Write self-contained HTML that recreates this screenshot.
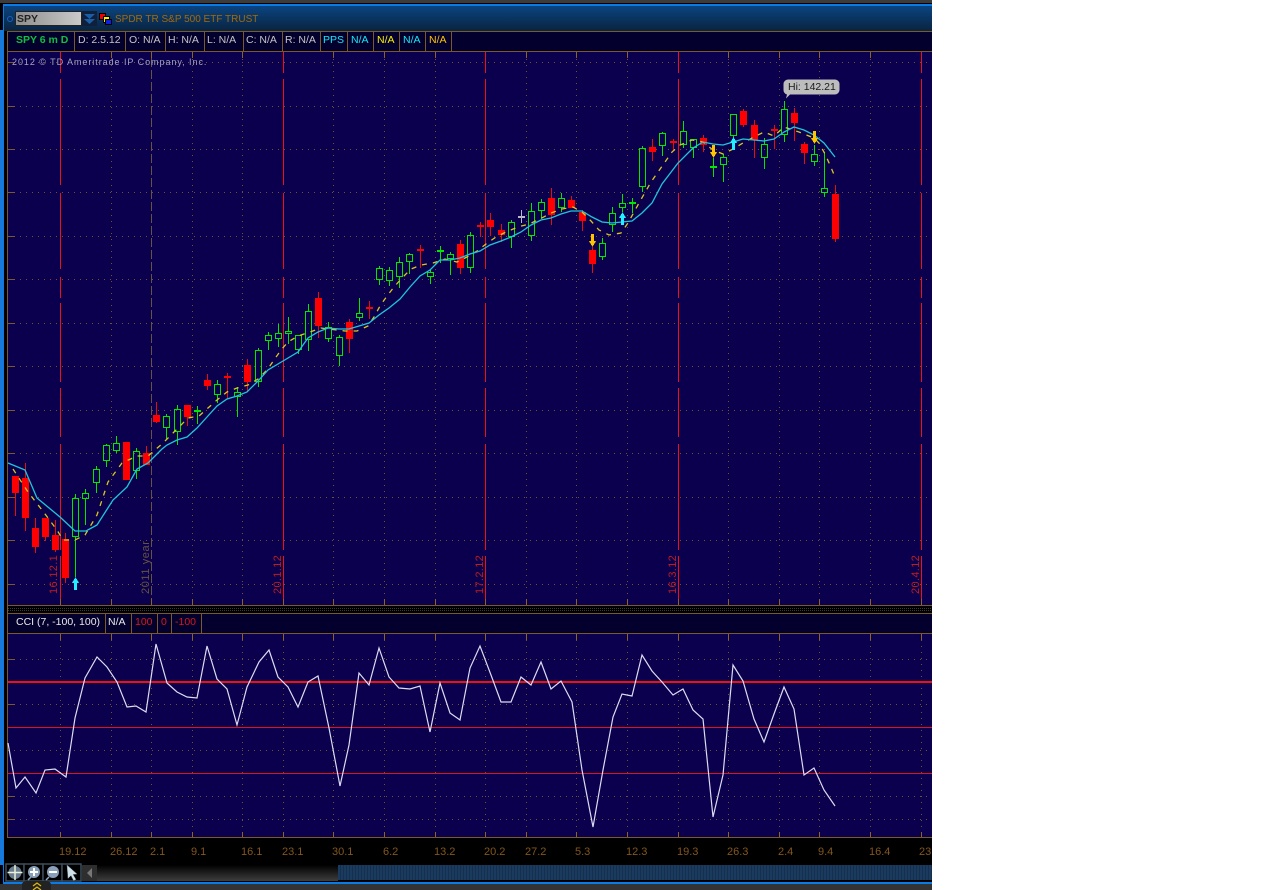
<!DOCTYPE html>
<html><head><meta charset="utf-8"><title>SPY</title>
<style>
html,body{margin:0;padding:0;background:#fff}
body{width:1274px;height:890px;overflow:hidden;position:relative;font-family:"Liberation Sans",sans-serif}
#f{position:absolute;left:0;top:0;width:932px;height:890px;background:#000;overflow:hidden}
.a{position:absolute}
.t{position:absolute;white-space:nowrap;font-size:10.5px;line-height:13px}
.x{position:absolute;top:846px;color:#84561e;font-size:11px;line-height:13px;white-space:nowrap}
</style></head><body>
<div id="f">
<div class="a" style="left:0;top:0;width:932px;height:3px;background:#3c3c3c"></div>
<div class="a" style="left:3px;top:4px;width:929px;height:2px;background:#0a7ae6"></div>
<div class="a" style="left:3px;top:4px;width:1px;height:879px;background:#0a7ae6"></div>
<div class="a" style="left:3px;top:882px;width:929px;height:2px;background:#0a7ae6"></div>
<div class="a" style="left:0;top:30px;width:3px;height:835px;background:#1a78d8"></div>
<div class="a" style="left:4px;top:6px;width:928px;height:25px;background:linear-gradient(#0a4480,#0a2440)"></div>
<div class="a" style="left:7px;top:31px;width:925px;height:1px;background:#7a5a20"></div>
<div class="a" style="left:7px;top:32px;width:925px;height:19px;background:#04002e"></div>
<div class="a" style="left:7px;top:614px;width:925px;height:19px;background:#04002e"></div>

<svg class="a" style="left:0;top:0" width="932" height="890" viewBox="0 0 932 890">
<rect x="8" y="52" width="924" height="553" fill="#0a004e"/>
<rect x="8" y="634" width="924" height="203" fill="#0a004e"/>
<g shape-rendering="crispEdges">
<path d="M7 31.5H932M7 51.5H932M7 605.5H932M7 613.5H932M7 633.5H932M7 837.5H932M7.5 31V838" stroke="#7a5a28" fill="none"/>
<path d="M8 608.5H932M8 610.5H932" stroke="#3a3a3a" stroke-dasharray="1 1"/>
<path d="M74.5 32V51M125.5 32V51M165.5 32V51M204.5 32V51M243.5 32V51M282.5 32V51M320.5 32V51M347.5 32V51M373.5 32V51M399.5 32V51M425.5 32V51M451.5 32V51M105.5 614V633M131.5 614V633M157.5 614V633M171.5 614V633M201.5 614V633" stroke="#7a5a28"/>
<path d="M8 62.5H932M8 106.5H932M8 149.5H932M8 192.5H932M8 236.5H932M8 279.5H932M8 323.5H932M8 366.5H932M8 410.5H932M8 453.5H932M8 497.5H932M8 540.5H932M8 584.5H932M8 659.5H932M8 704.5H932M8 750.5H932M8 796.5H932M8 819.5H932" stroke="#705430" stroke-dasharray="1 5" fill="none"/>
<path d="M111.5 59V599M192.5 59V599M242.5 59V599M333.5 59V599M384.5 59V599M435.5 59V599M526.5 59V599M576.5 59V599M627.5 59V599M728.5 59V599M779.5 59V599M819.5 59V599M870.5 59V599M60.5 640V832M111.5 640V832M151.5 640V832M192.5 640V832M242.5 640V832M283.5 640V832M333.5 640V832M384.5 640V832M435.5 640V832M485.5 640V832M526.5 640V832M576.5 640V832M627.5 640V832M678.5 640V832M728.5 640V832M779.5 640V832M819.5 640V832M870.5 640V832M921.5 640V832" stroke="#705430" stroke-dasharray="1 5" fill="none"/>
<path d="M8 62.5h7M8 106.5h7M8 149.5h7M8 192.5h7M8 236.5h7M8 279.5h7M8 323.5h7M8 366.5h7M8 410.5h7M8 453.5h7M8 497.5h7M8 540.5h7M8 584.5h7M8 659.5h7M8 704.5h7M8 796.5h7M8 819.5h7" stroke="#7a5a28"/>
<path d="M111.5 52v6M151.5 52v6M192.5 52v6M242.5 52v6M333.5 52v6M384.5 52v6M435.5 52v6M526.5 52v6M576.5 52v6M627.5 52v6M728.5 52v6M779.5 52v6M819.5 52v6M870.5 52v6M60.5 599v6M111.5 599v6M151.5 599v6M192.5 599v6M242.5 599v6M283.5 599v6M333.5 599v6M384.5 599v6M435.5 599v6M485.5 599v6M526.5 599v6M576.5 599v6M627.5 599v6M678.5 599v6M728.5 599v6M779.5 599v6M819.5 599v6M870.5 599v6M921.5 599v6M60.5 634v6M111.5 634v6M151.5 634v6M192.5 634v6M242.5 634v6M283.5 634v6M333.5 634v6M384.5 634v6M435.5 634v6M485.5 634v6M526.5 634v6M576.5 634v6M627.5 634v6M678.5 634v6M728.5 634v6M779.5 634v6M819.5 634v6M870.5 634v6M921.5 634v6M60.5 832v5M111.5 832v5M151.5 832v5M192.5 832v5M242.5 832v5M283.5 832v5M333.5 832v5M384.5 832v5M435.5 832v5M485.5 832v5M526.5 832v5M576.5 832v5M627.5 832v5M678.5 832v5M728.5 832v5M779.5 832v5M819.5 832v5M870.5 832v5M921.5 832v5" stroke="#8a6428" fill="none"/>
<path d="M151.500 58V599" stroke="#665440" stroke-dasharray="9 3"/>
<path d="M60.500 52V73M60.500 79V185M60.500 193V269M60.500 277V298M60.500 303V382M60.500 388V437M60.500 444V550M60.500 556V599M283.500 52V73M283.500 79V185M283.500 193V269M283.500 277V298M283.500 303V382M283.500 388V437M283.500 444V550M283.500 556V599M485.500 52V73M485.500 79V185M485.500 193V269M485.500 277V298M485.500 303V382M485.500 388V437M485.500 444V550M485.500 556V599M678.500 52V73M678.500 79V185M678.500 193V269M678.500 277V298M678.500 303V382M678.500 388V437M678.500 444V550M678.500 556V599M921.500 52V73M921.500 79V185M921.500 193V269M921.500 277V298M921.500 303V382M921.500 388V437M921.500 444V550M921.500 556V599" stroke="#ee1018"/>
<path d="M8 682H932" stroke="#f01010" stroke-width="2"/>
<path d="M8 727.500H932M8 773.500H932" stroke="#e01020"/>

<!-- red candles -->
<path stroke="#e80c0c" fill="none" d="M15.5 476V516M25.5 463V531M35.5 518V553M45.5 518V541M55.5 520V552M65.5 533V583M146.5 446V465M156.5 402V423M187.5 405V426M207.5 374V390M227.5 373V399M247.5 359V391M318.5 292V338M349.5 319V353M369.5 301V319M420.5 245V268M460.5 240V274M480.5 222V237M490.5 213V236M501.5 224V242M551.5 188V225M571.5 196V208M582.5 210V231M592.5 247V273M652.5 139V161M673.5 139V150M703.5 135V152M743.5 109V127M754.5 120V158M774.5 125V149M794.5 108V141M804.5 142V164M835.5 185V242"/>
<path fill="#ff0000" d="M12 476h7v17h-7zM22 478h7v40h-7zM32 528h7v19h-7zM42 518h7v19h-7zM52 535h7v15h-7zM62 539h7v39h-7zM123 442h7v38h-7zM143 453h7v12h-7zM153 415h7v7h-7zM184 405h7v12h-7zM204 380h7v6h-7zM224 376h7v2h-7zM244 365h7v17h-7zM315 298h7v28h-7zM346 322h7v17h-7zM366 307h7v2h-7zM417 249h7v2h-7zM457 244h7v24h-7zM477 225h7v2h-7zM487 220h7v7h-7zM498 230h7v5h-7zM548 198h7v17h-7zM568 200h7v8h-7zM579 212h7v9h-7zM589 250h7v14h-7zM649 147h7v5h-7zM670 141h7v2h-7zM700 138h7v7h-7zM740 111h7v14h-7zM751 125h7v15h-7zM771 129h7v2h-7zM791 113h7v10h-7zM801 144h7v9h-7zM832 194h7v45h-7z"/>
<!-- gray doji -->
<path stroke="#b8b8c8" fill="none" d="M521.5 210V223"/><rect x="518" y="216" width="7" height="2" fill="#b8b8c8"/>
<!-- green candles -->
<path stroke="#00e800" fill="none" d="M75.5 494v4M75.5 537v40M72.5 498.5h6v38h-6zM85.5 489v4M85.5 499v26M82.5 493.5h6v5h-6zM96.5 466v3M96.5 483v10M93.5 469.5h6v13h-6zM106.5 444v1M106.5 461v6M103.5 445.5h6v15h-6zM116.5 436v7M116.5 451v2M113.5 443.5h6v7h-6zM136.5 448v3M136.5 471v8M133.5 451.5h6v19h-6zM166.5 414v2M166.5 428v11M163.5 416.5h6v11h-6zM177.5 405v4M177.5 432v13M174.5 409.5h6v22h-6zM197.5 406v18M217.5 380v4M217.5 395v8M214.5 384.5h6v10h-6zM237.5 387v5M237.5 397v20M234.5 392.5h6v4h-6zM258.5 348v2M258.5 382v5M255.5 350.5h6v31h-6zM268.5 332v3M268.5 341v9M265.5 335.5h6v5h-6zM278.5 324v9M278.5 339v8M275.5 333.5h6v5h-6zM288.5 317v14M288.5 334v10M285.5 331.5h6v2h-6zM298.5 350v4M295.5 335.5h6v14h-6zM308.5 304v7M308.5 340v11M305.5 311.5h6v28h-6zM328.5 322v5M328.5 339v3M325.5 327.5h6v11h-6zM339.5 335v2M339.5 356v10M336.5 337.5h6v18h-6zM359.5 298v15M359.5 318v3M356.5 313.5h6v4h-6zM379.5 266v2M379.5 280v5M376.5 268.5h6v11h-6zM389.5 267v3M389.5 281v5M386.5 270.5h6v10h-6zM399.5 257v5M399.5 277v11M396.5 262.5h6v14h-6zM409.5 253v1M409.5 262v12M406.5 254.5h6v7h-6zM430.5 270v2M430.5 277v7M427.5 272.5h6v4h-6zM440.5 246v17M450.5 252v2M450.5 259v16M447.5 254.5h6v4h-6zM470.5 232v3M470.5 268v5M467.5 235.5h6v32h-6zM511.5 220v2M511.5 237v11M508.5 222.5h6v14h-6zM531.5 203v8M531.5 236v5M528.5 211.5h6v24h-6zM541.5 199v3M541.5 211v8M538.5 202.5h6v8h-6zM561.5 193v5M561.5 208v4M558.5 198.5h6v9h-6zM602.5 238v5M602.5 257v3M599.5 243.5h6v13h-6zM612.5 207v6M612.5 225v7M609.5 213.5h6v11h-6zM622.5 194v9M622.5 208v4M619.5 203.5h6v4h-6zM632.5 198v15M642.5 146v2M642.5 187v5M639.5 148.5h6v38h-6zM662.5 132v1M662.5 146v10M659.5 133.5h6v12h-6zM683.5 121v10M683.5 145v3M680.5 131.5h6v13h-6zM693.5 148v10M690.5 139.5h6v8h-6zM713.5 158v19M723.5 154v3M723.5 165v17M720.5 157.5h6v7h-6zM733.5 136v14M730.5 114.5h6v21h-6zM764.5 138v6M764.5 158v11M761.5 144.5h6v13h-6zM784.5 101v8M784.5 135v7M781.5 109.5h6v25h-6zM814.5 145v9M814.5 162v4M811.5 154.5h6v7h-6zM824.5 152v36M824.5 193v4M821.5 188.5h6v4h-6z"/>
<path fill="#00e800" d="M194 410h7v2h-7zM437 250h7v2h-7zM629 202h7v2h-7zM710 166h7v2h-7z"/>
</g>

<!-- moving averages -->
<polyline fill="none" stroke="#d8c81c" stroke-width="1.3" stroke-dasharray="5 6" points="13,469 28,492 42,510 57,530 63,540 75,540 85,535 97,515 108,482 122,463 137,456 148,456 162,444 171,435 179,427 188,418 199,416 208,408 217,400 227,392 237,388 248,385 258,379 267,370 274,360 281,350 288,342 298,336 310,332 321,328 345,331 357,331 368,326 374,317 380,306 387,296 394,287 402,278 411,269 421,265 433,263 445,259 457,262 467,257 477,251 486,244 496,237 506,232 518,227 529,224 540,219 551,213 562,209 573,207 582,212 591,221 599,230 609,235 621,233 628,223 639,203 651,182 658,172 665,162 672,152 680,145 692,140 703,142 713,150 723,154 733,149 743,143 754,137 764,132 774,136 784,127 799,132 814,138 819,143 825,154 830,165 835,177"/>
<polyline fill="none" stroke="#1fc6da" stroke-width="1.3" points="8,463 25,470 37,498 60,517 75,531 86,531 97,525 113,500 127,487 137,469 148,463 162,449 167,445 177,440 187,437 197,428 207,417 217,406 227,399 237,396 247,392 258,381 268,370 283,361 298,352 308,338 318,332 328,328 339,329 349,329 359,326 369,323 379,315 389,308 400,299 410,287 420,276 430,270 440,260 450,260 460,258 470,254 480,251 490,245 501,241 511,237 521,232 531,225 541,220 551,218 561,214 571,211 582,211 592,217 602,222 612,223 622,222 632,221 642,213 652,203 662,184 678,163 693,148 703,142 713,144 723,145 733,142 743,139 754,140 764,141 774,139 784,132 794,127 804,130 814,135 824,143 835,157"/>

<!-- arrows -->
<g shape-rendering="crispEdges">
<path fill="#22f0ff" d="M75.5 577l3.5 6h-2v7h-3v-7h-2zM622.5 212l3.5 6h-2v7h-3v-7h-2zM733.5 137l3.5 6h-2v7h-3v-7h-2z"/>
<path fill="#ffc400" d="M592.5 247l-3.5-6h2v-7h3v7h2zM713.5 158l-3.5-6h2v-7h3v7h2zM814.5 144l-3.5-6h2v-7h3v7h2z"/>
</g>

<!-- CCI -->
<polyline fill="none" stroke="#dcdcf0" stroke-width="1.2" points="8,743 16,788 25,777 36,793 45,770 55,769 66,777 75,718 85,678 97,657 107,667 117,682 127,707 136,706 146,712 156,644 167,683 177,692 187,697 197,698 207,646 217,679 227,689 237,725 247,687 259,662 269,650 278,677 288,687 298,707 308,682 318,676 329,728 340,786 349,745 359,673 369,685 379,648 389,677 399,688 410,689 420,686 430,732 440,683 450,713 460,720 470,668 480,646 491,675 501,702 511,702 521,677 531,685 541,662 551,689 561,681 572,702 582,770 593,827 603,770 613,717 622,694 632,696 642,655 652,671 662,682 673,695 683,689 693,710 703,719 713,817 723,775 733,665 743,681 754,719 764,742 774,714 784,687 794,709 804,775 814,768 824,790 835,806"/>

<!-- rotated labels -->
<g font-family="'Liberation Sans',sans-serif" font-size="11" letter-spacing=".35">
<text transform="translate(57 594) rotate(-90)" fill="#c01c20">16.12.1</text>
<text transform="translate(149 594) rotate(-90)" fill="#665440" letter-spacing=".6">2011 year</text>
<text transform="translate(281 594) rotate(-90)" fill="#c01c20">20.1.12</text>
<text transform="translate(483 594) rotate(-90)" fill="#c01c20">17.2.12</text>
<text transform="translate(676 594) rotate(-90)" fill="#c01c20">16.3.12</text>
<text transform="translate(919 594) rotate(-90)" fill="#c01c20">20.4.12</text>
</g>

<!-- Hi label -->
<path d="M788 79.5h47a4.5 4.5 0 0 1 4.5 4.5v6a4.5 4.5 0 0 1-4.5 4.5h-45l-4 4 1-4a4.5 4.5 0 0 1-3.500-4.500v-6a4.500 4.500 0 0 1 4.500-4.500z" fill="#bdbdbd"/>
</svg>

<div class="t" style="left:788px;top:81px;color:#1a1a1a">Hi: 142.21</div>
<div class="t" style="left:12px;top:56px;color:#a4a4bc;font-size:9px;letter-spacing:.95px">2012 © TD Ameritrade IP Company, Inc.</div>

<!-- title bar -->
<div class="a" style="left:7px;top:16px;width:4px;height:4px;border:1px solid #1a60c0;border-radius:50%"></div>
<div class="a" style="left:15px;top:11px;width:67px;height:15px;background:linear-gradient(90deg,#8e8e8e,#cacaca);border:1px solid #222;box-sizing:border-box"></div>
<div class="t" style="left:17px;top:13px;font-weight:bold;color:#222">SPY</div>
<svg class="a" style="left:82px;top:11px" width="15" height="15"><rect width="15" height="15" fill="#10203a"/><path d="M2 3h11l-5.500 5zM2 8h11l-5.500 5z" fill="#1a5ea8"/></svg>
<svg class="a" style="left:99px;top:12px" width="14" height="14" shape-rendering="crispEdges"><rect x="0.500" y="1.500" width="6" height="6" fill="#f00000" stroke="#000"/><rect x="4.500" y="4.500" width="6" height="6" fill="#f8f000" stroke="#000"/><rect x="6.500" y="7.500" width="6" height="5" fill="#1020e0" stroke="#000"/></svg>
<div class="t" style="left:115px;top:13px;color:#a56a08;font-size:10px">SPDR TR S&amp;P 500 ETF TRUST</div>

<!-- info row -->
<div class="t" style="left:16px;top:34px;color:#10c040;font-weight:bold">SPY 6 m D</div>
<div class="t" style="left:78px;top:34px;color:#c4c4c4">D: 2.5.12</div>
<div class="t" style="left:129px;top:34px;color:#c4c4c4">O: N/A</div>
<div class="t" style="left:168px;top:34px;color:#c4c4c4">H: N/A</div>
<div class="t" style="left:207px;top:34px;color:#c4c4c4">L: N/A</div>
<div class="t" style="left:246px;top:34px;color:#c4c4c4">C: N/A</div>
<div class="t" style="left:285px;top:34px;color:#c4c4c4">R: N/A</div>
<div class="t" style="left:323px;top:34px;color:#10e8f8">PPS</div>
<div class="t" style="left:351px;top:34px;color:#10e8f8">N/A</div>
<div class="t" style="left:377px;top:34px;color:#f8f000">N/A</div>
<div class="t" style="left:403px;top:34px;color:#10e8f8">N/A</div>
<div class="t" style="left:429px;top:34px;color:#ffc400">N/A</div>

<!-- CCI row -->
<div class="t" style="left:16px;top:616px;color:#e8e8e8">CCI (7, -100, 100)</div>
<div class="t" style="left:108px;top:616px;color:#e8e8e8">N/A</div>
<div class="t" style="left:135px;top:616px;color:#d81818">100</div>
<div class="t" style="left:161px;top:616px;color:#d81818">0</div>
<div class="t" style="left:175px;top:616px;color:#d81818">-100</div>

<!-- axis -->
<div class="x" style="left:59px">19.12</div>
<div class="x" style="left:110px">26.12</div>
<div class="x" style="left:150px">2.1</div>
<div class="x" style="left:191px">9.1</div>
<div class="x" style="left:241px">16.1</div>
<div class="x" style="left:282px">23.1</div>
<div class="x" style="left:332px">30.1</div>
<div class="x" style="left:383px">6.2</div>
<div class="x" style="left:434px">13.2</div>
<div class="x" style="left:484px">20.2</div>
<div class="x" style="left:525px">27.2</div>
<div class="x" style="left:575px">5.3</div>
<div class="x" style="left:626px">12.3</div>
<div class="x" style="left:677px">19.3</div>
<div class="x" style="left:727px">26.3</div>
<div class="x" style="left:778px">2.4</div>
<div class="x" style="left:818px">9.4</div>
<div class="x" style="left:869px">16.4</div>
<div class="x" style="left:919px">23</div>

<!-- bottom controls -->
<div class="a" style="left:97px;top:865px;width:241px;height:16px;background:linear-gradient(#000,#3e3e3e)"></div>
<div class="a" style="left:338px;top:865px;width:594px;height:15px;background:repeating-linear-gradient(90deg,#1a3a5e 0 2px,#14304e 2px 3px)"></div>
<div class="a" style="left:82px;top:865px;width:15px;height:16px;background:#2e2e2e"></div>
<svg class="a" style="left:82px;top:865px" width="15" height="16"><path d="M5 8l5-5v10z" fill="#777"/></svg>
<svg class="a" style="left:5px;top:863px" width="77" height="19">
<g fill="#000" stroke="#3c4c5c" stroke-width="1.500"><rect x="1" y="1" width="18" height="17"/><rect x="19" y="1" width="19" height="17"/><rect x="38" y="1" width="19" height="17"/><rect x="57" y="1" width="19" height="17"/></g>
<circle cx="10" cy="9.500" r="6.500" fill="#6a7c90"/><path d="M10 2v15M2.500 9.500h15" stroke="#e8f0d8" stroke-width="1.500"/>
<path d="M23 17l3-3" stroke="#8aa8c8" stroke-width="1.500"/><circle cx="29" cy="9" r="6" fill="#8aa0b8"/><path d="M29 5v8M25 9h8" stroke="#fff" stroke-width="2"/>
<path d="M41 17l3-3" stroke="#8aa8c8" stroke-width="1.500"/><circle cx="48" cy="9" r="6" fill="#8aa0b8"/><path d="M44 9h8" stroke="#fff" stroke-width="2"/>
<path d="M62 2l10 9-4 .5 3 5-2.500 1-2.500-5-3 3z" fill="#cfe0e8" stroke="#6a8090" stroke-width=".5"/>
</svg>
<div class="a" style="left:0;top:884px;width:932px;height:6px;background:#333"></div>
<div class="a" style="left:22px;top:881px;width:29px;height:9px;background:#222;border-radius:4px 4px 0 0"></div>
<svg class="a" style="left:32px;top:882px" width="10" height="8"><path d="M1 4l4-3 4 3M1 8l4-3 4 3" fill="none" stroke="#e0b810" stroke-width="1.300"/></svg>
</div>
</body></html>
